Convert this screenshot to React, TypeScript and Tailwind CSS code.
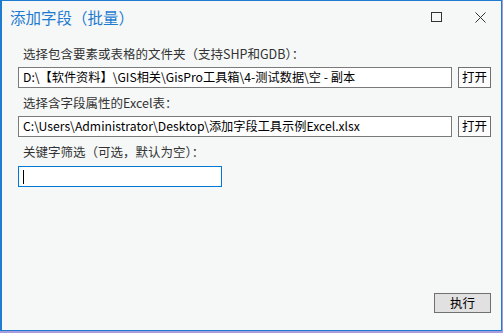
import { useState } from 'react'

const font = "font-['Noto_Sans_CJK_SC',sans-serif]"

function PathRow({ value }: { value: string }) {
  return (
    <div className="mt-[3px] flex h-[21px] items-stretch gap-[6px]">
      <div className="flex flex-1 items-center border border-[#7a7a7a] bg-white pl-[4px] text-[12.2px] text-black">
        {value}
      </div>
      <button
        type="button"
        className="flex w-[33px] items-center justify-center border border-[#707070] bg-[#fdfdfd] text-[12.5px] text-black"
      >
        打开
      </button>
    </div>
  )
}

export default function App() {
  const [keyword] = useState('')

  return (
    <div className={`h-[333px] w-[503px] bg-[#a99cdc] ${font}`}>
      <div className="flex h-[331px] w-[502px] flex-col border-t border-r border-b border-l-2 border-[#1e7bd0] bg-[#f6f8f8]">
        {/* title bar */}
        <div className="flex h-[33px] items-center justify-between pl-[8px] pr-[15px]">
          <span className="text-[15.5px] text-[#1e7bd0]">添加字段（批量）</span>
          <div className="flex items-center gap-[33px]">
            <svg width="11" height="11" viewBox="0 0 11 11">
              <rect x="0.5" y="0.5" width="10" height="9" fill="none" stroke="#333" strokeWidth="1" />
            </svg>
            <svg width="11" height="11" viewBox="0 0 11 11">
              <path d="M0.5 0.5 L10.5 10.5 M10.5 0.5 L0.5 10.5" stroke="#333" strokeWidth="1" />
            </svg>
          </div>
        </div>

        <div className="flex flex-1 flex-col pl-[16px] pr-[10px] pb-[17px]">
          <p className="mt-[10px] h-[20px] pl-[5px] text-[12.5px] leading-[20px] text-[#333]">
            选择包含要素或表格的文件夹（支持SHP和GDB）：
          </p>
          <PathRow value="D:\【软件资料】\GIS相关\GisPro工具箱\4-测试数据\空 - 副本" />

          <p className="mt-[5px] h-[20px] pl-[5px] text-[12.5px] leading-[20px] text-[#333]">
            选择含字段属性的Excel表：
          </p>
          <PathRow value="C:\Users\Administrator\Desktop\添加字段工具示例Excel.xlsx" />

          <p className="mt-[5px] h-[20px] pl-[5px] text-[12.5px] leading-[20px] text-[#333]">
            关键字筛选（可选，默认为空）：
          </p>
          <div className="mt-[4px] flex h-[21px] w-[204px] items-center border border-[#0078d7] bg-white pl-[4px] text-[12px]">
            {keyword}
            <span className="h-[14px] w-px bg-black" />
          </div>

          <div className="mt-auto flex justify-end">
            <button
              type="button"
              className="flex h-[20px] w-[57px] items-center justify-center border border-[#707070] bg-[#e1e1e1] text-[12.5px] text-black"
            >
              执行
            </button>
          </div>
        </div>
      </div>
    </div>
  )
}
